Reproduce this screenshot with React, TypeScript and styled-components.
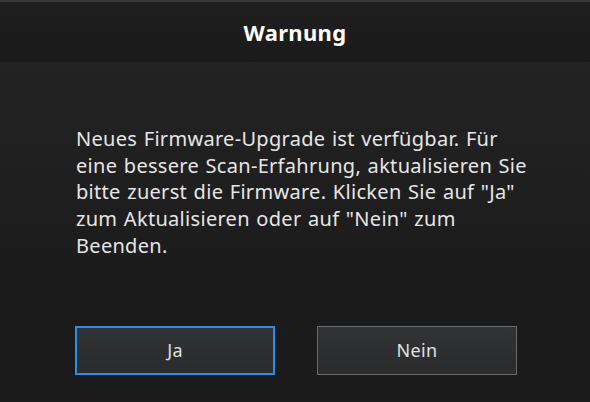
import React from "react";
import styled, { createGlobalStyle } from "styled-components";

const Global = createGlobalStyle`
  html, body { margin: 0; padding: 0; background: #1c1c1c; }
  body { font-family: "Noto Sans", "Open Sans", sans-serif; }
`;

const Dialog = styled.div`
  width: 590px;
  height: 402px;
  display: flex;
  flex-direction: column;
  background: #1c1c1c;
  border-top: 2px solid #3a3a3a;
  box-sizing: border-box;
`;

const Header = styled.div`
  height: 60px;
  flex: none;
  display: flex;
  align-items: center;
  justify-content: center;
  background: linear-gradient(#1f1f1f, #1a1a1a);
  color: #ffffff;
  font-size: 22px;
  font-weight: 700;
  letter-spacing: 0.3px;
`;

const Body = styled.div`
  flex: 1;
  display: flex;
  flex-direction: column;
  background: linear-gradient(#232323, #1b1b1b 70%);
  padding: 64px 0 0 76px;
`;

const Message = styled.p`
  margin: 0;
  width: 470px;
  color: #e6e6e6;
  font-size: 20px;
  line-height: 26.7px;
  letter-spacing: 0.3px;
  word-spacing: 1px;
  white-space: nowrap;
`;

const Buttons = styled.div`
  margin-top: 66px;
  margin-left: -1px;
  display: flex;
  gap: 42px;
`;

const Button = styled.button<{ $primary?: boolean }>`
  width: 200px;
  height: 49px;
  box-sizing: border-box;
  background: linear-gradient(#323335, #2a2b2d);
  border: ${(p) => (p.$primary ? "2px solid #2f8de8" : "1px solid #6b6b6b")};
  color: #e0e0e0;
  font-family: "Noto Sans", "Open Sans", sans-serif;
  font-size: 18px;
  letter-spacing: 0.3px;
  padding: 0;
`;

export default function App() {
  return (
    <>
      <Global />
      <Dialog>
        <Header>Warnung</Header>
        <Body>
          <Message>
            Neues Firmware-Upgrade ist verfügbar. Für
            <br />
            eine bessere Scan-Erfahrung, aktualisieren Sie
            <br />
            bitte zuerst die Firmware. Klicken Sie auf "Ja"
            <br />
            zum Aktualisieren oder auf "Nein" zum
            <br />
            Beenden.
          </Message>
          <Buttons>
            <Button $primary>Ja</Button>
            <Button>Nein</Button>
          </Buttons>
        </Body>
      </Dialog>
    </>
  );
}
